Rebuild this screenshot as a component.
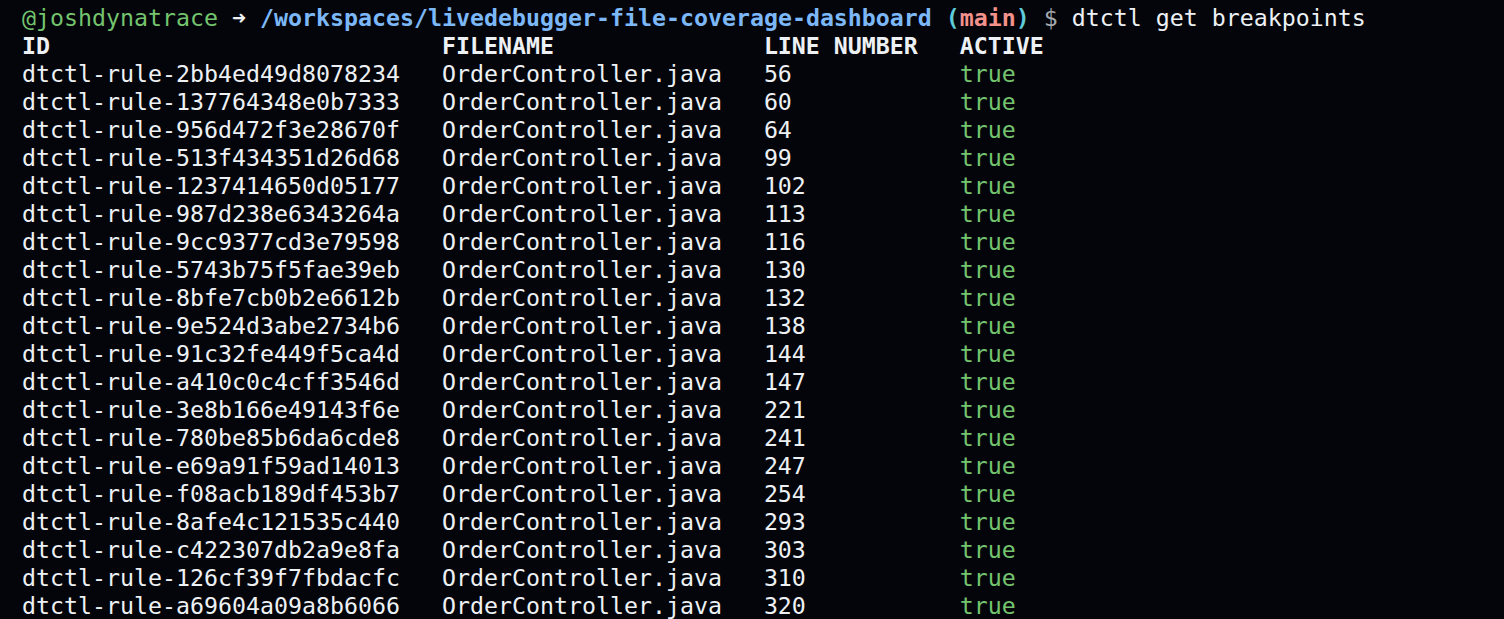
import React from "react";

const rows: [string, string, string][] = [
  ["dtctl-rule-2bb4ed49d8078234", "OrderController.java", "56"],
  ["dtctl-rule-137764348e0b7333", "OrderController.java", "60"],
  ["dtctl-rule-956d472f3e28670f", "OrderController.java", "64"],
  ["dtctl-rule-513f434351d26d68", "OrderController.java", "99"],
  ["dtctl-rule-1237414650d05177", "OrderController.java", "102"],
  ["dtctl-rule-987d238e6343264a", "OrderController.java", "113"],
  ["dtctl-rule-9cc9377cd3e79598", "OrderController.java", "116"],
  ["dtctl-rule-5743b75f5fae39eb", "OrderController.java", "130"],
  ["dtctl-rule-8bfe7cb0b2e6612b", "OrderController.java", "132"],
  ["dtctl-rule-9e524d3abe2734b6", "OrderController.java", "138"],
  ["dtctl-rule-91c32fe449f5ca4d", "OrderController.java", "144"],
  ["dtctl-rule-a410c0c4cff3546d", "OrderController.java", "147"],
  ["dtctl-rule-3e8b166e49143f6e", "OrderController.java", "221"],
  ["dtctl-rule-780be85b6da6cde8", "OrderController.java", "241"],
  ["dtctl-rule-e69a91f59ad14013", "OrderController.java", "247"],
  ["dtctl-rule-f08acb189df453b7", "OrderController.java", "254"],
  ["dtctl-rule-8afe4c121535c440", "OrderController.java", "293"],
  ["dtctl-rule-c422307db2a9e8fa", "OrderController.java", "303"],
  ["dtctl-rule-126cf39f7fbdacfc", "OrderController.java", "310"],
  ["dtctl-rule-a69604a09a8b6066", "OrderController.java", "320"],
];

// pad a cell out to its column width, like the cli's tabwriter
const pad = (s: string, n: number) => s + " ".repeat(Math.max(0, n - s.length));

export default function App() {
  return (
    <div className="w-[1504px] h-[619px] overflow-hidden bg-[#03050b] text-[#eef1f4] pl-[22px] pt-[4px] font-['DejaVu_Sans_Mono','Liberation_Mono',monospace] text-[23.25px] leading-[28px]">
      <pre className="whitespace-pre font-[inherit]">
        {/* prompt line */}
        <div>
          <span className="text-[#74c46e]">@joshdynatrace</span>
          <span> ➜ </span>
          <span className="font-bold text-[#7cb8f8]">/workspaces/livedebugger-file-coverage-dashboard</span>
          <span> </span>
          <span className="font-bold text-[#5fcbd8]">(</span>
          <span className="font-bold text-[#f2928a]">main</span>
          <span className="font-bold text-[#5fcbd8]">)</span>
          <span className="text-[#a3a8ae]"> $ </span>
          <span>dtctl get breakpoints</span>
        </div>
        <div className="font-bold">
          {pad("ID", 30) + pad("FILENAME", 23) + pad("LINE NUMBER", 14) + "ACTIVE"}
        </div>
        {rows.map(([id, file, line]) => (
          <div key={id}>
            {pad(id, 30) + pad(file, 23) + pad(line, 14)}
            <span className="text-[#74c46e]">true</span>
          </div>
        ))}
      </pre>
    </div>
  );
}
